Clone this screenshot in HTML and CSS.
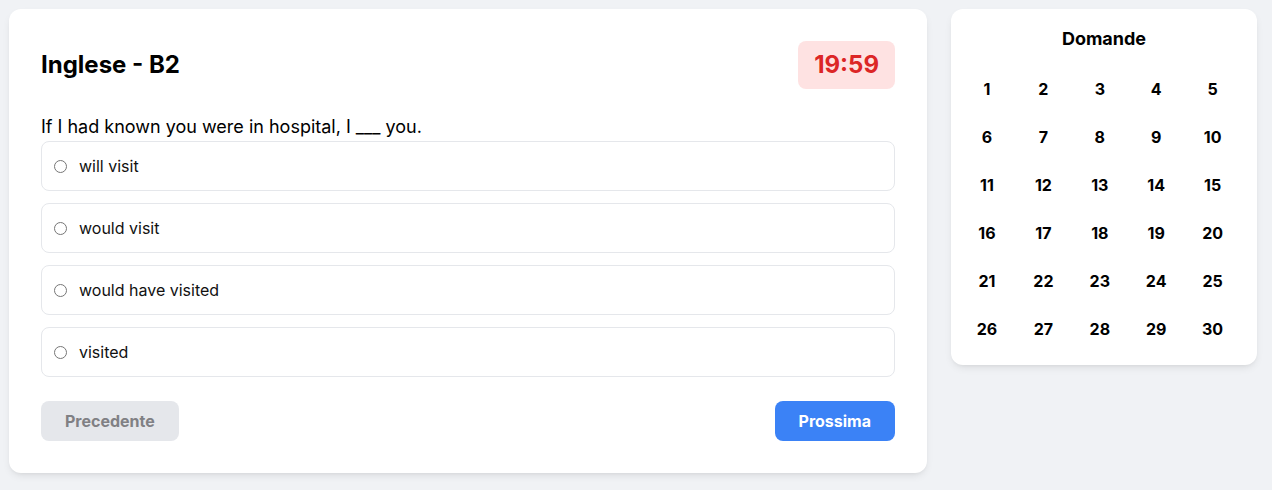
FILE: index.html
```html
<!DOCTYPE html>
<html lang="it">
<head>
<meta charset="utf-8">
<title>Quiz</title>
<link rel="stylesheet" href="styles.css">
</head>
<body>
<div class="layout">
  <main class="card quiz">
    <div class="quiz-header">
      <h1 class="quiz-title">Inglese - B2</h1>
      <div class="timer">19:59</div>
    </div>
    <p class="question">If I had known you were in hospital, I ___ you.</p>
    <div class="options">
      <label class="option"><input type="radio" name="a"><span>will visit</span></label>
      <label class="option"><input type="radio" name="a"><span>would visit</span></label>
      <label class="option"><input type="radio" name="a"><span>would have visited</span></label>
      <label class="option"><input type="radio" name="a"><span>visited</span></label>
    </div>
    <div class="nav">
      <button class="btn btn-prev" disabled>Precedente</button>
      <button class="btn btn-next">Prossima</button>
    </div>
  </main>
  <aside class="card side">
    <h2 class="side-title">Domande</h2>
    <div class="grid">
      <div class="num">1</div><div class="num">2</div><div class="num">3</div><div class="num">4</div><div class="num">5</div>
      <div class="num">6</div><div class="num">7</div><div class="num">8</div><div class="num">9</div><div class="num">10</div>
      <div class="num">11</div><div class="num">12</div><div class="num">13</div><div class="num">14</div><div class="num">15</div>
      <div class="num">16</div><div class="num">17</div><div class="num">18</div><div class="num">19</div><div class="num">20</div>
      <div class="num">21</div><div class="num">22</div><div class="num">23</div><div class="num">24</div><div class="num">25</div>
      <div class="num">26</div><div class="num">27</div><div class="num">28</div><div class="num">29</div><div class="num">30</div>
    </div>
  </aside>
</div>
</body>
</html>
```
FILE: styles.css
```css
* { box-sizing: border-box; }
html, body { margin: 0; }
body {
  background: #f0f2f5;
  font-family: Inter, "Liberation Sans", sans-serif;
  color: #000;
}
.layout {
  display: flex;
  align-items: flex-start;
  gap: 24px;
  padding: 9px;
}
.card {
  background: #fff;
  border-radius: 12px;
  box-shadow: 0 4px 8px -2px rgba(0,0,0,0.10), 0 2px 4px -2px rgba(0,0,0,0.06);
}
.quiz {
  width: 918px;
  padding: 32px;
}
.quiz-header {
  display: flex;
  justify-content: space-between;
  align-items: center;
  margin-bottom: 24px;
}
.quiz-title {
  margin: 0;
  font-size: 24px;
  line-height: 32px;
  font-weight: 700;
}
.timer {
  background: #fee2e2;
  color: #dc2626;
  font-size: 24px;
  line-height: 32px;
  font-weight: 700;
  padding: 8px 16px;
  border-radius: 8px;
}
.question {
  margin: 0;
  font-size: 18px;
  line-height: 28px;
}
.options {
  display: flex;
  flex-direction: column;
  gap: 12px;
}
.option {
  display: flex;
  align-items: center;
  gap: 12px;
  height: 50px;
  padding: 0 12px;
  border: 1px solid #e5e7eb;
  border-radius: 8px;
  font-size: 16px;
  color: #111;
}
.option input {
  margin: 0;
  width: 13px;
  height: 13px;
}
.nav {
  display: flex;
  justify-content: space-between;
  margin-top: 24px;
}
.btn {
  font-family: Inter, "Liberation Sans", sans-serif;
  font-size: 16px;
  line-height: 24px;
  font-weight: 700;
  padding: 8px 24px;
  border: none;
  border-radius: 8px;
}
.btn-prev {
  background: #e5e7eb;
  color: #808084;
}
.btn-next {
  background: #3b82f6;
  color: #fff;
}
.side {
  width: 306px;
  padding: 16px;
}
.side-title {
  margin: 0 0 16px;
  text-align: center;
  font-size: 18px;
  line-height: 28px;
  font-weight: 700;
}
.grid {
  display: grid;
  grid-template-columns: repeat(5, 1fr);
  gap: 8px;
}
.num {
  width: 40px;
  height: 40px;
  display: flex;
  align-items: center;
  justify-content: center;
  font-size: 16px;
  font-weight: 700;
}
```
